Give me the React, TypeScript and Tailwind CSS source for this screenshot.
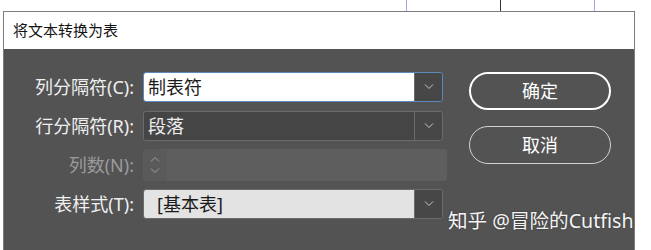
function Chevron({ up = false, className = "" }: { up?: boolean; className?: string }) {
	return (
		<svg width="10" height="6" viewBox="0 0 10 6" className={className} fill="none" stroke="currentColor" strokeWidth="1">
			<path d={up ? "M1 5.5 5 1.5 9 5.5" : "M1 0.5 5 4.5 9 0.5"} />
		</svg>
	);
}

function Combo({ value, tone }: { value: string; tone: "focus" | "dark" | "light" }) {
	const box =
		tone === "focus"
			? "border-[#5b88bd] border-[1.5px]"
			: "border-[#6b6b6b] border";
	const field =
		tone === "focus"
			? "bg-white text-[#1a1a1a] pl-[4px]"
			: tone === "light"
				? "bg-[#e3e3e3] text-[#1a1a1a] pl-[13px]"
				: "bg-[#454545] text-[#ededed] pl-[4px]";
	return (
		<div className={`flex h-[30px] w-[300px] overflow-hidden rounded-[3px] ${box}`}>
			<div className={`flex flex-1 items-center text-[18px] leading-none ${field}`}>{value}</div>
			<div className="flex w-[28px] items-center justify-center border-l border-[#6b6b6b] bg-[#474747] text-[#c8c8c8]">
				<Chevron />
			</div>
		</div>
	);
}

function Row({ label, disabled = false, children }: { label: string; disabled?: boolean; children: React.ReactNode }) {
	return (
		<div className="flex items-center">
			<div className={`w-[130px] text-right text-[18px] leading-none ${disabled ? "text-[#9b9b9b]" : "text-[#efefef]"}`}>
				{label}
			</div>
			<div className="ml-[9px]">{children}</div>
		</div>
	);
}

export default function App() {
	return (
		<div className="h-[250px] w-[651px] overflow-hidden bg-white font-['Noto_Sans','Noto_Sans_CJK_SC',sans-serif]">
			<div className="flex h-[11px]">
				<div className="w-[406px]" />
				<div className="w-px bg-[#a3a3e3]" />
				<div className="w-[93px]" />
				<div className="w-px bg-[#333333]" />
				<div className="w-[93px]" />
				<div className="w-px bg-[#a3a3e3]" />
			</div>

			<div className="ml-[3px] w-[632px] border-x border-t border-[#7c7c7c]">
				<div className="flex h-[37px] items-center bg-white pl-[9px] text-[15px] text-[#141414]">
					将文本转换为表
				</div>

				<div className="relative flex h-[201px] bg-[#535353] pt-[23px]">
					<div className="flex w-[443px] flex-col">
						<Row label="列分隔符(C):">
							<Combo value="制表符" tone="focus" />
						</Row>
						<div className="mt-[9px]">
							<Row label="行分隔符(R):">
								<Combo value="段落" tone="dark" />
							</Row>
						</div>
						<div className="mt-[8px]">
							<Row label="列数(N):" disabled>
								<div className="flex h-[32px] w-[304px] rounded-[3px] bg-[#5e5e5e]">
									<div className="flex w-[24px] flex-col items-center justify-center gap-[6px] rounded-[3px] bg-[#5a5a5a] text-[#a0a0a0]">
										<Chevron up />
										<Chevron />
									</div>
								</div>
							</Row>
						</div>
						<div className="mt-[8px]">
							<Row label="表样式(T):">
								<Combo value="[基本表]" tone="light" />
							</Row>
						</div>
					</div>

					<div className="ml-[22px] flex flex-col gap-[16px]">
						<button className="flex h-[38px] w-[142px] items-center justify-center rounded-full border-2 border-white text-[18px] text-white">
							确定
						</button>
						<button className="flex h-[38px] w-[142px] items-center justify-center rounded-full border border-[#d2d2d2] text-[18px] text-white">
							取消
						</button>
					</div>

					<div className="absolute left-[444px] top-[160px] whitespace-nowrap text-[19.6px] leading-[24px] text-[#f4f4f4] [text-shadow:0_0_2px_rgba(0,0,0,0.35)]">
						知乎 @冒险的Cutfish
					</div>
				</div>
			</div>
		</div>
	);
}
